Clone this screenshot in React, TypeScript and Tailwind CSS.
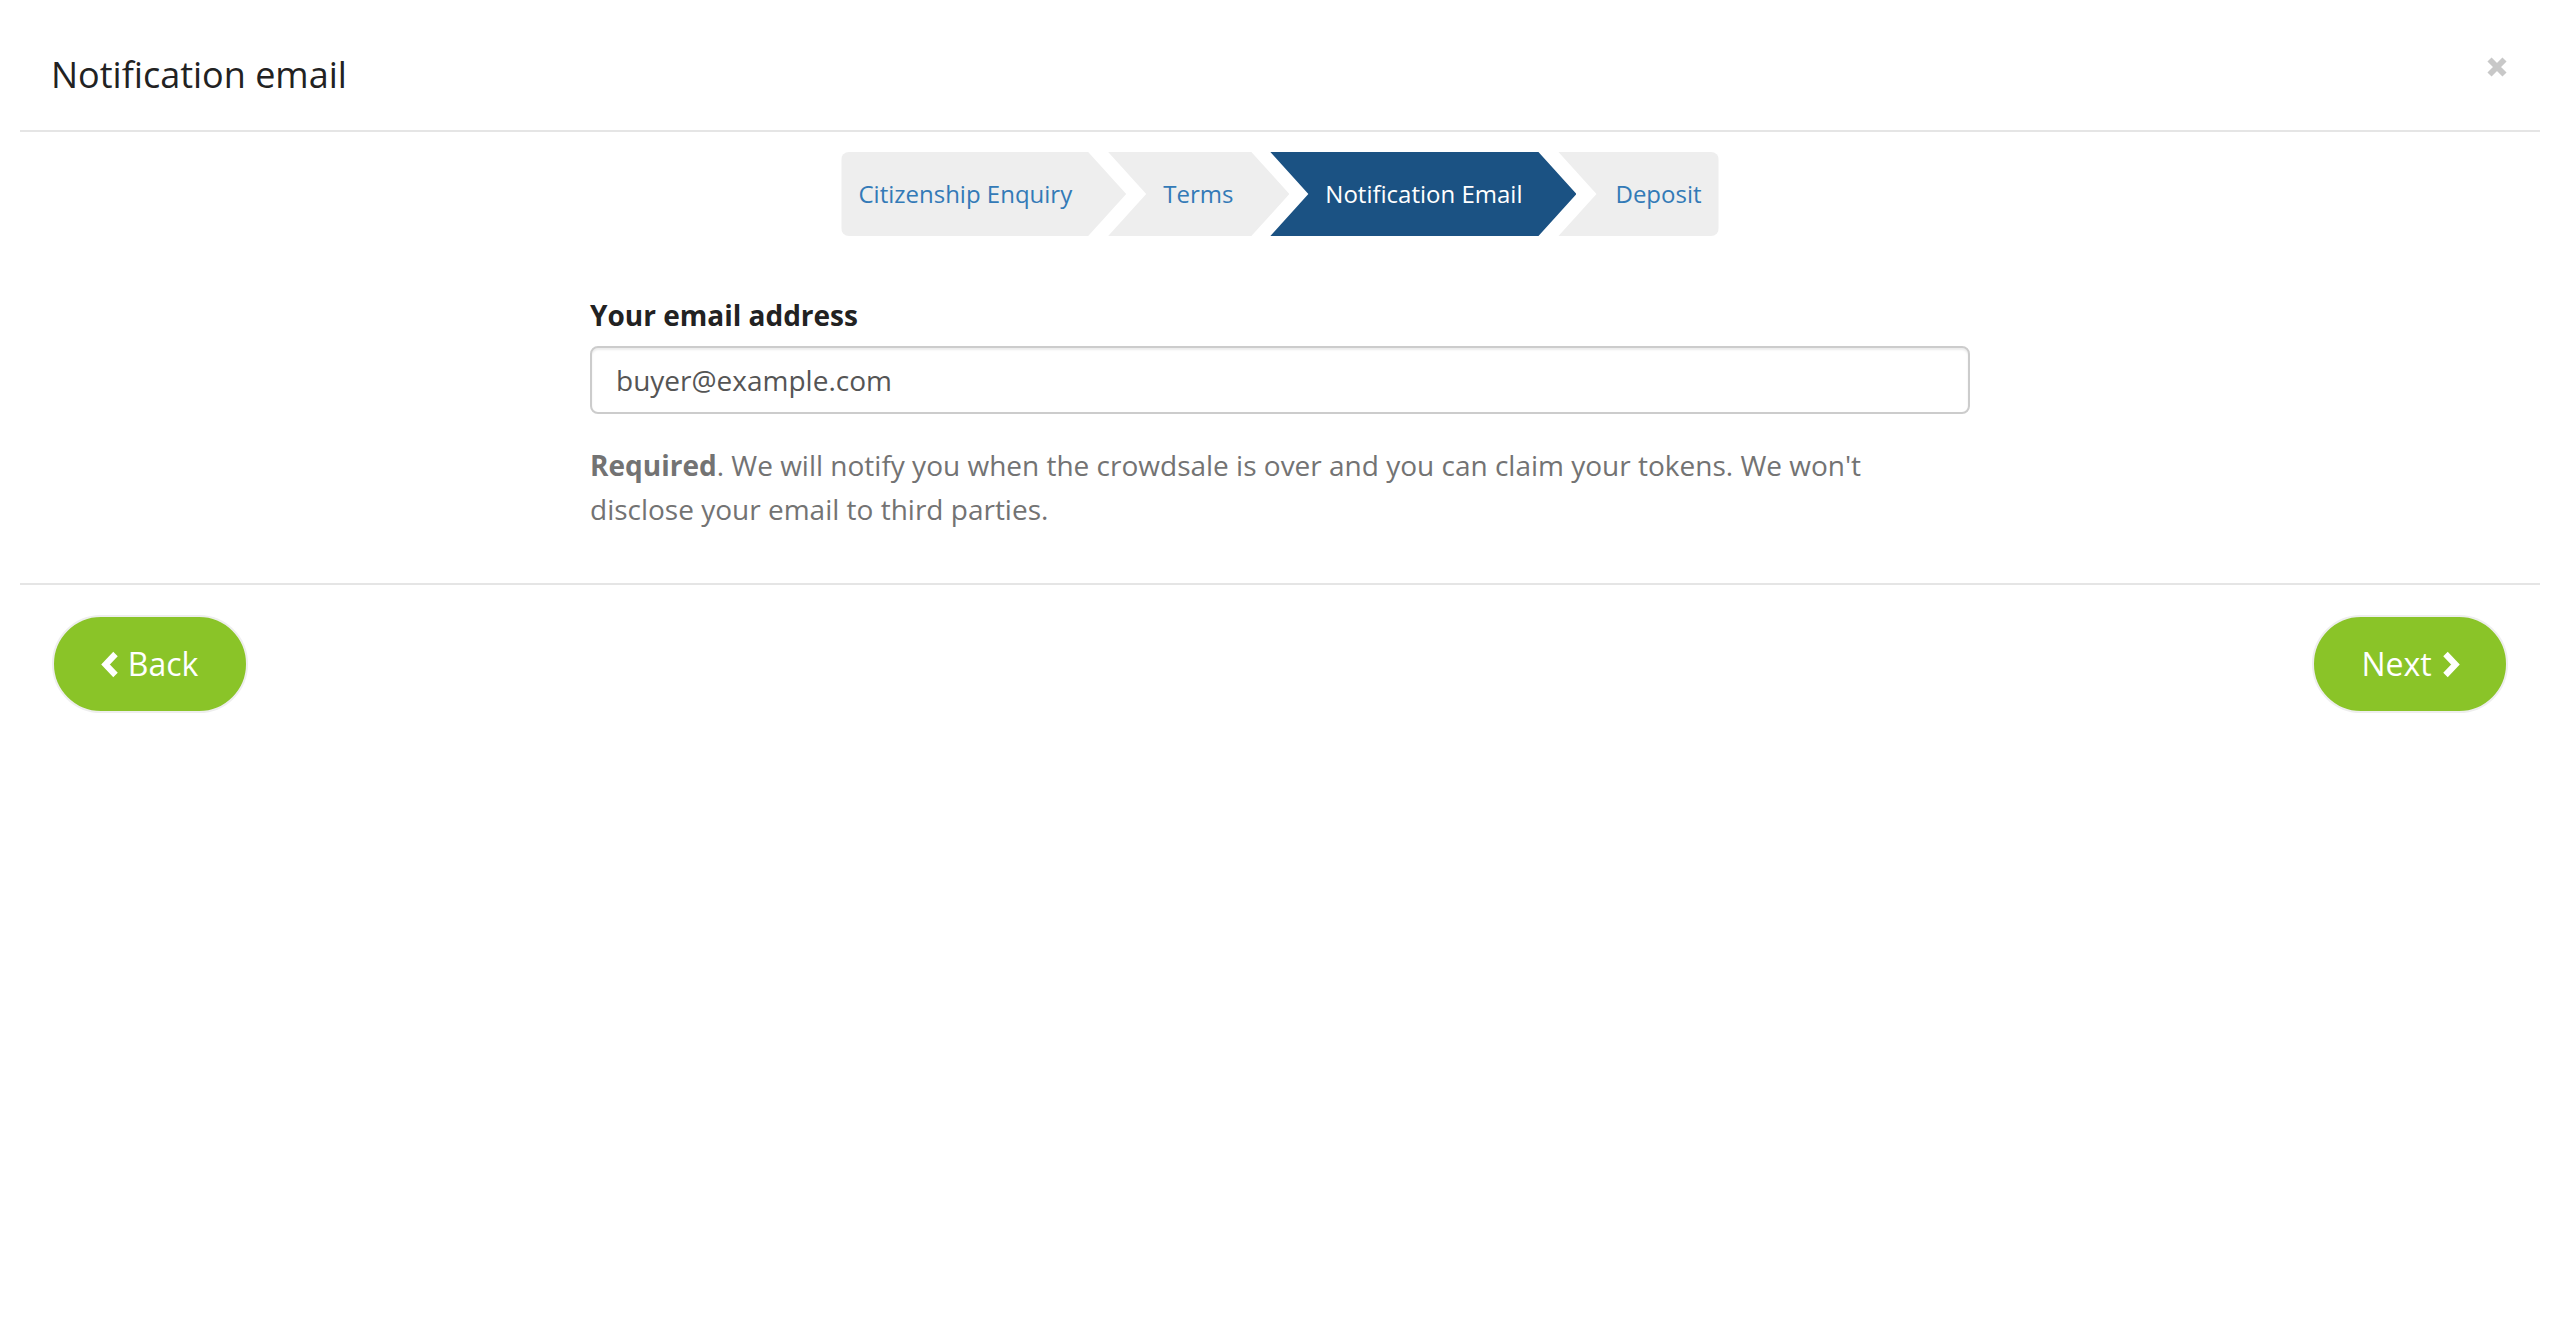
import React from "react";

function ChevronLeft() {
  return (
    <svg width="19" height="27" viewBox="0 0 19 27" className="shrink-0">
      <polyline
        points="15.5,3 5.5,13.5 15.5,24"
        fill="none"
        stroke="white"
        strokeWidth="6.2"
        strokeLinecap="butt"
        strokeLinejoin="miter"
      />
    </svg>
  );
}

function ChevronRight() {
  return (
    <svg width="19" height="27" viewBox="0 0 19 27" className="shrink-0">
      <polyline
        points="3.5,3 13.5,13.5 3.5,24"
        fill="none"
        stroke="white"
        strokeWidth="6.2"
        strokeLinecap="butt"
        strokeLinejoin="miter"
      />
    </svg>
  );
}

export default function App() {
  return (
    <div className="min-h-[1318px] w-full bg-white px-[20px] pt-[20px] font-['Open_Sans',sans-serif]">
      {/* Header */}
      <div className="flex items-start justify-between border-b-2 border-[#e5e5e5] pb-[35px] pl-[31px] pr-[33px] pt-[35px]">
        <h4 className="text-[36px] leading-[40px] text-[#222222]">Notification email</h4>
        <button className="mt-[2px]" aria-label="Close">
          <svg width="20" height="20" viewBox="0 0 20 20">
            <path d="M2.5 2.5 L17.5 17.5 M17.5 2.5 L2.5 17.5" stroke="#c8c8c8" strokeWidth="5.8" strokeLinecap="butt" />
          </svg>
        </button>
      </div>

      {/* Body */}
      <div className="pb-[52px] pt-[20px]">
        <div className="flex justify-center">
          <div className="flex h-[84px] items-center rounded-l-[8px] bg-[#eeeeee] pl-[17px] pr-[54px] text-[24px] text-[#337ab7] [clip-path:polygon(0_0,calc(100%_-_38px)_0,100%_50%,calc(100%_-_38px)_100%,0_100%)]">
            Citizenship Enquiry
          </div>
          <div className="-ml-[18px] flex h-[84px] items-center bg-[#eeeeee] pl-[55px] pr-[56px] text-[24px] text-[#337ab7] [clip-path:polygon(0_0,calc(100%_-_38px)_0,100%_50%,calc(100%_-_38px)_100%,0_100%,38px_50%)]">
            Terms
          </div>
          <div className="-ml-[19px] flex h-[84px] items-center bg-[#1b5283] pl-[55px] pr-[54px] text-[24px] text-white [clip-path:polygon(0_0,calc(100%_-_38px)_0,100%_50%,calc(100%_-_38px)_100%,0_100%,38px_50%)]">
            Notification Email
          </div>
          <div className="-ml-[18px] flex h-[84px] items-center rounded-r-[8px] bg-[#eeeeee] pl-[57px] pr-[17px] text-[24px] text-[#337ab7] [clip-path:polygon(0_0,100%_0,100%_100%,0_100%,38px_50%)]">
            Deposit
          </div>
        </div>

        <div className="mx-auto mt-[59px] w-[1380px]">
          <label className="mb-[11px] block text-[28px] font-bold leading-[40px] text-[#222222]">
            Your email address
          </label>
          <div className="flex h-[68px] items-center rounded-[8px] border-2 border-[#cccccc] pl-[24px] text-[28px] text-[#555555] shadow-[inset_0_2px_2px_rgba(0,0,0,0.075)]">
            buyer@example.com
          </div>
          <p className="mt-[29px] text-[28px] leading-[44px] text-[#737373]">
            <strong className="font-bold">Required</strong>. We will notify you when the crowdsale is over and you can claim your tokens. We won't
            <br />
            disclose your email to third parties.
          </p>
        </div>
      </div>

      {/* Footer */}
      <div className="flex items-center justify-between border-t-2 border-[#e5e5e5] px-[32px] pt-[30px]">
        <button className="flex h-[98px] w-[196px] items-center justify-center gap-[9px] rounded-full border-2 border-[#eeeeee] bg-[#8ac428] pr-[2px] text-[32px] text-white">
          <ChevronLeft />
          <span>Back</span>
        </button>
        <button className="flex h-[98px] w-[196px] items-center justify-center gap-[10px] rounded-full border-2 border-[#eeeeee] bg-[#8ac428] pl-[2px] text-[32px] text-white">
          <span>Next</span>
          <ChevronRight />
        </button>
      </div>
    </div>
  );
}
